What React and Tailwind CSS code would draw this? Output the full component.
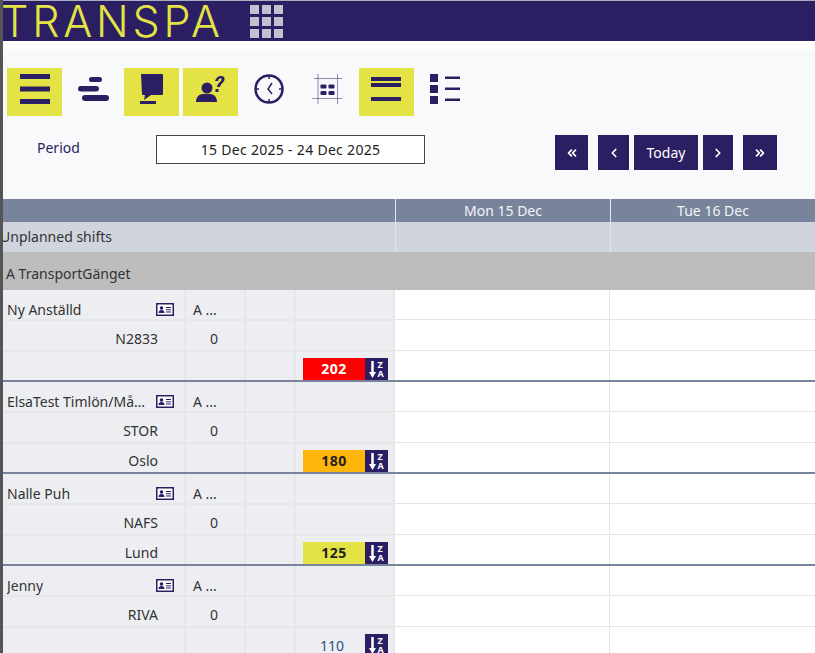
import { ChevronLeft, ChevronRight, ChevronsLeft, ChevronsRight } from "lucide-react";

const font = { fontFamily: '"Noto Sans", sans-serif' };

function Bars() {
  return (
    <svg width="30" height="30" viewBox="0 0 30 30" fill="#2b1e63">
      <rect x="0" y="0" width="30" height="5" />
      <rect x="0" y="12.500" width="30" height="5" />
      <rect x="0" y="25" width="30" height="5" />
    </svg>
  );
}

function Pills() {
  return (
    <svg width="32" height="24" viewBox="0 0 32 24" fill="#2b1e63">
      <rect x="12" y="0" width="13" height="5" rx="2.500" />
      <rect x="1" y="9" width="21" height="5.500" rx="2.750" />
      <rect x="5" y="18" width="27" height="6" rx="3" />
    </svg>
  );
}

function Comment() {
  return (
    <svg width="24" height="30" viewBox="0 0 24 30" fill="#2b1e63">
      <path d="M1 0h21a1 1 0 0 1 1 1v19a1 1 0 0 1-1 1H11l-7 5 1-5H3a1 1 0 0 1-1-1z" />
      <rect x="0" y="27" width="16" height="3" />
    </svg>
  );
}

function PersonQuestion() {
  return (
    <svg width="29" height="26" viewBox="0 0 29 26" fill="#2b1e63">
      <circle cx="11" cy="12" r="5.500" />
      <path d="M0 26c0-5 3-8 7-8h7c4 0 7 3 7 8z" />
      <path d="M19 5c1-3 3-5 6-5 2.500 0 4 1.500 3.500 3.800-.5 3-3.500 3.500-4.500 7.200h-3c.5-4 4-5 4.500-7.200.2-1-.3-1.500-1-1.500-1.200 0-2 1-2.500 2.700z" />
      <rect x="19.500" y="13" width="3" height="3" />
    </svg>
  );
}

function Clock() {
  return (
    <svg width="30" height="30" viewBox="0 0 30 30" fill="none" stroke="#2b1e63">
      <circle cx="15" cy="15" r="13.500" strokeWidth="2.500" />
      <path d="M15 2v3M15 25v3M2 15h3M25 15h3" strokeWidth="1.500" />
      <path d="M18 9l-4 6 4 5" strokeWidth="1.500" />
    </svg>
  );
}

function Frame() {
  return (
    <svg width="30" height="30" viewBox="0 0 30 30" fill="none">
      <path d="M0 24.500h30M2 4.500h28M6 0v30M25.500 0v30" stroke="#2b1e63" strokeOpacity="0.5" />
      <g fill="#2b1e63">
        <rect x="8.500" y="10.500" width="6" height="4" rx="1" />
        <rect x="16.500" y="10.500" width="6" height="4" rx="1" />
        <rect x="8.500" y="17" width="6" height="4" rx="1" />
        <rect x="16.500" y="17" width="6" height="4" rx="1" />
      </g>
    </svg>
  );
}

function Rows() {
  return (
    <svg width="30" height="24" viewBox="0 0 30 24" fill="#2b1e63">
      <rect x="0" y="0" width="30" height="4" />
      <rect x="0" y="6" width="30" height="4" />
      <rect x="0" y="20" width="30" height="4" />
    </svg>
  );
}

function DetailList() {
  return (
    <svg width="30" height="30" viewBox="0 0 30 30" fill="#2b1e63">
      <rect x="0" y="0" width="8" height="8" />
      <rect x="0" y="11" width="8" height="8" />
      <rect x="0" y="22" width="8" height="8" />
      <rect x="15" y="2.500" width="15" height="2.500" />
      <rect x="15" y="13.500" width="15" height="2.500" />
      <rect x="15" y="24.500" width="15" height="2.500" />
    </svg>
  );
}

function IdCard() {
  return (
    <svg width="18" height="13" viewBox="0 0 18 13" className="mb-[3px] shrink-0">
      <rect x="0.750" y="0.750" width="16.500" height="11.500" fill="#fff" stroke="#2b1e63" strokeWidth="1.500" />
      <circle cx="5.500" cy="5" r="1.800" fill="#2b1e63" />
      <path d="M2.500 10c0-2 1.200-3 3-3s3 1 3 3z" fill="#2b1e63" />
      <path d="M10 4.500h5M10 6.800h5M10 9h5" stroke="#2b1e63" />
    </svg>
  );
}

function SortButton() {
  return (
    <div className="flex h-[22px] w-[23px] items-center justify-center gap-[1px] bg-[#2b1e63] text-white">
      <svg width="7" height="17" viewBox="0 0 7 17" fill="#fff">
        <rect x="2.250" y="0" width="2.500" height="13" />
        <path d="M0 11h7l-3.500 6z" />
      </svg>
      <div className="flex flex-col text-[9px] leading-[9px] font-bold">
        <span>Z</span>
        <span>A</span>
      </div>
    </div>
  );
}

function ToolButton({ active, children }) {
  return (
    <div className={`flex h-12 w-[55px] items-center justify-center pb-[6px] ${active ? "bg-[#e3e345]" : ""}`}>
      {children}
    </div>
  );
}

function NavButton({ className, children }) {
  return (
    <button className={`flex h-[35px] items-center justify-center bg-[#2b1e63] text-sm text-white ${className}`}>
      {children}
    </button>
  );
}

const lineGrid = "grid grid-cols-[183px_60px_50px_99px_215px_1fr]";
const cell = "flex items-end bg-[#eceef1] border-r-2 border-[#e6e7e9] text-sm text-[#333]";

function EmployeeLine({ name, zero, tag, first, last }) {
  const bottom = last ? "" : "border-b-2";
  const textLine = first ? "leading-[18px]" : "pb-px";
  const dayBottom = last ? "" : "h-[30px] border-b border-[#e5e5e5]";
  return (
    <div className={`${lineGrid} ${last ? "h-[28px]" : "h-[31px]"}`}>
      <div className={`${cell} ${bottom} ${textLine} justify-between pl-1 pr-[10px]`}>{name}</div>
      <div className={`${cell} ${bottom} ${textLine} pl-[7px]`}>{zero}</div>
      <div className={`${cell} ${bottom}`}></div>
      <div className={`${cell} ${bottom} pl-[7px]`}>{tag}</div>
      <div className={`border-r border-[#e5e5e5] ${dayBottom}`}></div>
      <div className={dayBottom}></div>
    </div>
  );
}

function Employee({ name, code, city, badge, badgeColor, badgeText, plain }) {
  return (
    <div className="border-b-2 border-[#78849b]">
      <EmployeeLine
        first
        name={
          <>
            <span className="max-w-[140px] truncate">{name}</span>
            <IdCard />
          </>
        }
        zero="A ..."
      />
      <EmployeeLine
        name={<span className="ml-auto pr-[16px]">{code}</span>}
        zero={<span className="ml-auto pr-[26px]">0</span>}
      />
      <EmployeeLine
        last
        name={<span className="ml-auto pr-[16px]">{city}</span>}
        tag={
          plain ? (
            <div className="flex w-[85px] items-center justify-end gap-[21px]">
              <span className="pt-[2px] text-[#1f4e8c]">{badge}</span>
              <SortButton />
            </div>
          ) : (
            <div className="flex items-center">
              <span className={`flex h-[22px] w-[62px] items-center justify-center text-sm font-bold tracking-[0.500px] ${badgeColor} ${badgeText}`}>
                {badge}
              </span>
              <SortButton />
            </div>
          )
        }
      />
    </div>
  );
}

export default function App() {
  return (
    <div className="flex h-[653px] w-[815px] overflow-hidden bg-white" style={font}>
      <div className="w-[3px] shrink-0 bg-[#555]"></div>
      <div className="flex min-w-0 flex-1 flex-col overflow-hidden">
        <div className="h-[41px] shrink-0 border-t border-[#a9adc0] bg-[#2b1e63]">
          <div className="flex h-10 items-center">
            <span
              className="-ml-[2px] w-[249px] text-[43px] leading-10 font-light tracking-[3.800px] text-[#e3e345]"
              style={{ fontFamily: "Inter, sans-serif" }}
            >
              TRANSPA
            </span>
            <div className="grid grid-cols-3 gap-[3px]">
              {[1, 2, 3, 4, 5, 6, 7, 8, 9].map((n) => (
                <div key={n} className="h-[9px] w-[9px] bg-[#c5c0d0]"></div>
              ))}
            </div>
          </div>
        </div>
        <div className="mt-2 h-[150px] shrink-0 bg-[#f8f9fb] pt-[19px]">
          <div className="flex gap-[3.600px] pl-1">
            <ToolButton active><Bars /></ToolButton>
            <ToolButton><Pills /></ToolButton>
            <ToolButton active><Comment /></ToolButton>
            <ToolButton active><PersonQuestion /></ToolButton>
            <ToolButton><Clock /></ToolButton>
            <ToolButton><Frame /></ToolButton>
            <ToolButton active><Rows /></ToolButton>
            <ToolButton><DetailList /></ToolButton>
          </div>
          <div className="mt-[19px] flex items-start">
            <span className="w-[153px] pt-[3px] pl-[34px] text-sm text-[#2b1e63]">Period</span>
            <div className="flex h-[29px] w-[269px] items-center justify-center border border-[#444] bg-white text-sm tracking-[0.300px] text-[#222]">
              15 Dec 2025 - 24 Dec 2025
            </div>
            <div className="ml-[130px] flex">
              <NavButton className="w-[33px]"><ChevronsLeft size={14} strokeWidth={3} /></NavButton>
              <NavButton className="ml-[10px] w-[31px]"><ChevronLeft size={14} strokeWidth={3} /></NavButton>
              <NavButton className="ml-[5px] w-[64px]">Today</NavButton>
              <NavButton className="ml-[5px] w-[30px]"><ChevronRight size={14} strokeWidth={3} /></NavButton>
              <NavButton className="ml-[10px] w-[34px]"><ChevronsRight size={14} strokeWidth={3} /></NavButton>
            </div>
          </div>
        </div>
        <div className="grid h-[23px] shrink-0 grid-cols-[392px_215px_1fr] bg-[#78849b] text-sm leading-[23px] text-[#f3f4f6]">
          <div></div>
          <div className="border-l border-[#e5e7eb] text-center">Mon 15 Dec</div>
          <div className="border-l border-[#e5e7eb] text-center">Tue 16 Dec</div>
        </div>
        <div className="grid h-[30px] shrink-0 grid-cols-[392px_215px_1fr] bg-[#d0d5dd] text-sm leading-[30px] text-[#333]">
          <div className="-ml-[3px]">Unplanned shifts</div>
          <div className="border-l border-[#e5e7eb]"></div>
          <div className="border-l border-[#e5e7eb]"></div>
        </div>
        <div className="h-[38px] shrink-0 bg-[#bdbdbd] pl-[3px] text-sm leading-[43px] text-[#333]">
          A TransportGänget
        </div>
        <Employee name="Ny Anställd" code="N2833" badge="202" badgeColor="bg-[#ff0000]" badgeText="text-white" />
        <Employee name="ElsaTest Timlön/Månadslön" code="STOR" city="Oslo" badge="180" badgeColor="bg-[#ffb60a]" badgeText="text-[#222]" />
        <Employee name="Nalle Puh" code="NAFS" city="Lund" badge="125" badgeColor="bg-[#e3e345]" badgeText="text-[#222]" />
        <Employee name="Jenny" code="RIVA" badge="110" plain />
      </div>
    </div>
  );
}
